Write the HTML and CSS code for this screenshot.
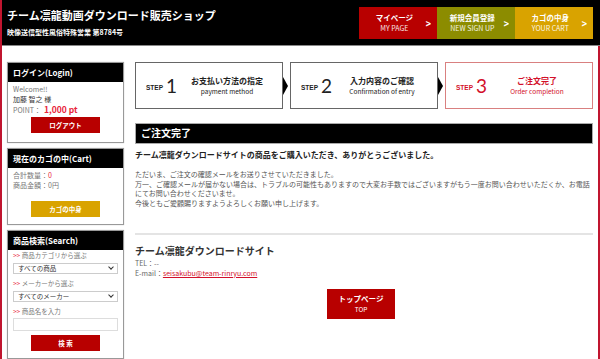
FILE: index.html
```html
<!DOCTYPE html>
<html lang="ja">
<head>
    <meta charset="UTF-8">
    <meta name="viewport" content="width=device-width, initial-scale=1.0">
    <title>ご注文完了 | チーム凛龍動画ダウンロード販売ショップ</title>
    <link rel="stylesheet" href="styles.css">
</head>
<body>
    <!-- Header -->
    <header class="site-header">
        <div class="brand">
            <div class="brand-title">チーム凛龍動画ダウンロード販売ショップ</div>
            <div class="brand-sub">映像送信型性風俗特殊営業 第8784号</div>
        </div>
        <nav class="gnav">
            <a class="gnav-item red" href="#">
                <span class="gnav-text"><b>マイページ</b><span>MY PAGE</span></span>
                <span class="chev">&gt;</span>
            </a>
            <a class="gnav-item olive" href="#">
                <span class="gnav-text"><b>新規会員登録</b><span>NEW SIGN UP</span></span>
                <span class="chev">&gt;</span>
            </a>
            <a class="gnav-item gold" href="#">
                <span class="gnav-text"><b>カゴの中身</b><span>YOUR CART</span></span>
                <span class="chev">&gt;</span>
            </a>
        </nav>
    </header>

    <div class="page">
        <!-- Sidebar -->
        <aside class="side">
            <div class="side-box">
                <div class="side-head">ログイン(Login)</div>
                <div class="side-body login-body">
                    <div class="muted">Welcome!!</div>
                    <div class="user">加藤 智之 様</div>
                    <div class="muted">POINT：<span class="point">1,000 pt</span></div>
                    <a class="side-btn red" href="#">ログアウト</a>
                </div>
            </div>

            <div class="side-box">
                <div class="side-head">現在のカゴの中(Cart)</div>
                <div class="side-body cart-body">
                    <div class="muted">合計数量：<span class="red-text">0</span></div>
                    <div class="muted">商品金額：0円</div>
                    <a class="side-btn gold" href="#">カゴの中身</a>
                </div>
            </div>

            <div class="side-box">
                <div class="side-head">商品検索(Search)</div>
                <div class="side-body search-body">
                    <div class="field-label"><span class="mark">&gt;&gt;</span> 商品カテゴリから選ぶ</div>
                    <div class="select-wrap">
                        <select class="select">
                            <option>すべての商品</option>
                        </select>
                    </div>
                    <div class="field-label"><span class="mark">&gt;&gt;</span> メーカーから選ぶ</div>
                    <div class="select-wrap">
                        <select class="select">
                            <option>すべてのメーカー</option>
                        </select>
                    </div>
                    <div class="field-label"><span class="mark">&gt;&gt;</span> 商品名を入力</div>
                    <input class="text-input" type="text">
                    <a class="side-btn red" href="#">検 索</a>
                </div>
            </div>
        </aside>

        <!-- Main content -->
        <main class="content">
            <div class="steps">
                <div class="step">
                    <span class="step-label">STEP</span>
                    <span class="step-num">1</span>
                    <span class="step-text"><b>お支払い方法の指定</b><span>payment method</span></span>
                </div>
                <div class="step-arrow"></div>
                <div class="step">
                    <span class="step-label">STEP</span>
                    <span class="step-num">2</span>
                    <span class="step-text"><b>入力内容のご確認</b><span>Confirmation of entry</span></span>
                </div>
                <div class="step-arrow"></div>
                <div class="step current">
                    <span class="step-label">STEP</span>
                    <span class="step-num">3</span>
                    <span class="step-text"><b>ご注文完了</b><span>Order completion</span></span>
                </div>
            </div>

            <h2 class="section-title">ご注文完了</h2>
            <p class="thanks">チーム凛龍ダウンロードサイトの商品をご購入いただき、ありがとうございました。</p>
            <p class="notice">
                ただいま、ご注文の確認メールをお送りさせていただきました。<br>
                万一、ご確認メールが届かない場合は、トラブルの可能性もありますので大変お手数ではございますがもう一度お問い合わせいただくか、お電話にてお問い合わせくださいませ。<br>
                今後ともご愛顧賜りますようよろしくお願い申し上げます。
            </p>

            <div class="shop-info">
                <div class="shop-name">チーム凛龍ダウンロードサイト</div>
                <div class="shop-line">TEL：--</div>
                <div class="shop-line">E-mail：<a href="#" class="mail">seisakubu@team-rinryu.com</a></div>
            </div>

            <div class="top-wrap">
                <a class="top-btn" href="#"><b>トップページ</b><span>TOP</span></a>
            </div>
        </main>
    </div>
</body>
</html>
```

FILE: styles.css
```css
body {
    margin: 0;
    font-family: "Noto Sans CJK JP", "Noto Sans", sans-serif;
    color: #333;
    background-color: #fff;
    border-left: 2px solid #c0152f;
    min-height: 100vh;
    box-sizing: border-box;
}

a {
    text-decoration: none;
}

/* Header */
.site-header {
    display: flex;
    justify-content: space-between;
    align-items: flex-start;
    height: 45px;
    background-color: #000;
    border-bottom: 1px solid #888;
    padding: 0 7px 0 5px;
}

.brand {
    padding-top: 7px;
}

.brand-title {
    color: #fff;
    font-size: 11px;
    font-weight: bold;
    line-height: 16px;
}

.brand-sub {
    color: #fff;
    font-size: 7px;
    font-weight: bold;
    line-height: 10px;
    margin-top: 4px;
}

.gnav {
    display: flex;
    margin-top: 7px;
}

.gnav-item {
    display: flex;
    align-items: center;
    width: 78px;
    height: 32px;
    color: #fff;
    box-sizing: border-box;
    padding: 0 6px 0 4px;
}

.gnav-item.red { background-color: #b80000; }
.gnav-item.olive { background-color: #8c8c00; }
.gnav-item.gold { background-color: #d9a300; }

.gnav-text {
    flex: 1;
    display: flex;
    flex-direction: column;
    align-items: center;
}

.gnav-text b {
    font-size: 7.5px;
    line-height: 10px;
}

.gnav-text span {
    font-size: 7px;
    line-height: 10px;
    opacity: 0.9;
}

.chev {
    font-size: 9px;
    font-weight: bold;
    transform: scaleY(1.2);
}

/* Page */
.page {
    display: flex;
    gap: 11px;
    padding: 16px 5px 0 5px;
    border-right: 2px solid #c0152f;
    min-height: 313px;
    box-sizing: border-box;
}

.side {
    width: 117px;
    flex-shrink: 0;
    display: flex;
    flex-direction: column;
    gap: 5px;
}

.side-box {
    border: 1px solid #999;
    box-shadow: 0 0 1px #bbb;
}

.side-head {
    background-color: #000;
    color: #fff;
    font-size: 8px;
    font-weight: bold;
    height: 19px;
    line-height: 19px;
    padding-left: 5px;
}

.side-body {
    padding: 2px 5px 0 5px;
    font-size: 7px;
    line-height: 10px;
}

.muted {
    color: #777;
    height: 10px;
}

.user {
    color: #333;
    height: 10px;
}

.point {
    color: #e8253a;
    font-size: 8.5px;
    font-weight: bold;
    margin-left: 3px;
}

.red-text {
    color: #e8253a;
}

.side-btn {
    display: block;
    width: 69px;
    height: 16px;
    margin: 0 auto;
    color: #fff;
    font-size: 6.5px;
    font-weight: bold;
    line-height: 16px;
    text-align: center;
}

.side-btn.red { background-color: #b80000; }
.side-btn.gold { background-color: #d9a300; }

.login-body {
    padding-bottom: 9px;
}

.login-body .side-btn {
    margin-top: 3px;
}

.cart-body {
    padding-bottom: 7px;
}

.cart-body .side-btn {
    margin-top: 11px;
}

.search-body {
    padding: 0 5px 7px 5px;
}

.field-label {
    color: #777;
    font-size: 6.5px;
    line-height: 10px;
    height: 10px;
}

.mark {
    color: #e8253a;
}

.select-wrap {
    position: relative;
    margin: 3px 0 4px 0;
}

.select {
    appearance: none;
    -webkit-appearance: none;
    display: block;
    width: 100%;
    height: 11px;
    padding: 0 4px;
    border: 1px solid #ccc;
    background-color: #fff;
    font-family: inherit;
    font-size: 6.5px;
    line-height: 9px;
    color: #333;
    border-radius: 0;
}

.select-wrap::after {
    content: "";
    position: absolute;
    right: 5px;
    top: 2px;
    width: 3px;
    height: 3px;
    border-right: 1.3px solid #333;
    border-bottom: 1.3px solid #333;
    transform: rotate(45deg);
}

.text-input {
    display: block;
    width: 100%;
    height: 13px;
    box-sizing: border-box;
    border: 1px solid #ddd;
    margin: 2px 0 4px 0;
    padding: 0;
}

/* Main */
.content {
    flex: 1;
    min-width: 0;
}

.steps {
    display: flex;
    align-items: center;
    height: 47px;
}

.step {
    flex: 1;
    height: 100%;
    box-sizing: border-box;
    border: 1px solid #666;
    display: flex;
    align-items: center;
    padding: 0 5px 0 10px;
    color: #222;
}

.step.current {
    border-color: #d98080;
    color: #d3102a;
}

.step-label {
    font-family: "Liberation Sans", sans-serif;
    font-size: 6.5px;
    font-weight: bold;
    margin-right: 3px;
    padding-top: 4px;
}

.step-num {
    font-family: "Lato", sans-serif;
    font-size: 19px;
    font-weight: 400;
    line-height: 1;
}

.step-text {
    flex: 1;
    display: flex;
    flex-direction: column;
    align-items: center;
}

.step-text b {
    font-size: 8px;
    line-height: 11px;
}

.step-text span {
    font-size: 6.5px;
    line-height: 10px;
}

.step-arrow {
    width: 7px;
    height: 100%;
    display: flex;
    align-items: center;
}

.step-arrow::before {
    content: "";
    border-top: 9px solid transparent;
    border-bottom: 9px solid transparent;
    border-left: 5px solid #000;
}

.section-title {
    margin: 14px 0 0 0;
    background-color: #000;
    border: 1px solid #aaa;
    color: #fff;
    font-size: 10px;
    font-weight: bold;
    height: 19px;
    line-height: 18px;
    padding-left: 5px;
}

.thanks {
    margin: 5px 0 0 0;
    font-size: 8px;
    font-weight: bold;
    line-height: 12px;
    color: #222;
}

.notice {
    margin: 9px 0 0 0;
    font-size: 7px;
    line-height: 9.7px;
    color: #555;
}

.shop-info {
    margin-top: 24px;
    border-top: 2px solid #e4e4e4;
    padding-top: 9px;
}

.shop-name {
    font-size: 10px;
    font-weight: bold;
    line-height: 14px;
    color: #333;
}

.shop-line {
    font-size: 7px;
    line-height: 10px;
    color: #666;
}

.shop-line:first-of-type {
    margin-top: 3px;
}

.mail {
    color: #d3102a;
    text-decoration: underline;
}

.top-wrap {
    display: flex;
    justify-content: center;
    margin-top: 11px;
    padding-right: 6px;
}

.top-btn {
    display: flex;
    flex-direction: column;
    align-items: center;
    justify-content: center;
    width: 68px;
    height: 30px;
    background-color: #b80000;
    color: #fff;
}

.top-btn b {
    font-size: 7.5px;
    line-height: 10px;
}

.top-btn span {
    font-size: 6.5px;
    line-height: 10px;
}
```
